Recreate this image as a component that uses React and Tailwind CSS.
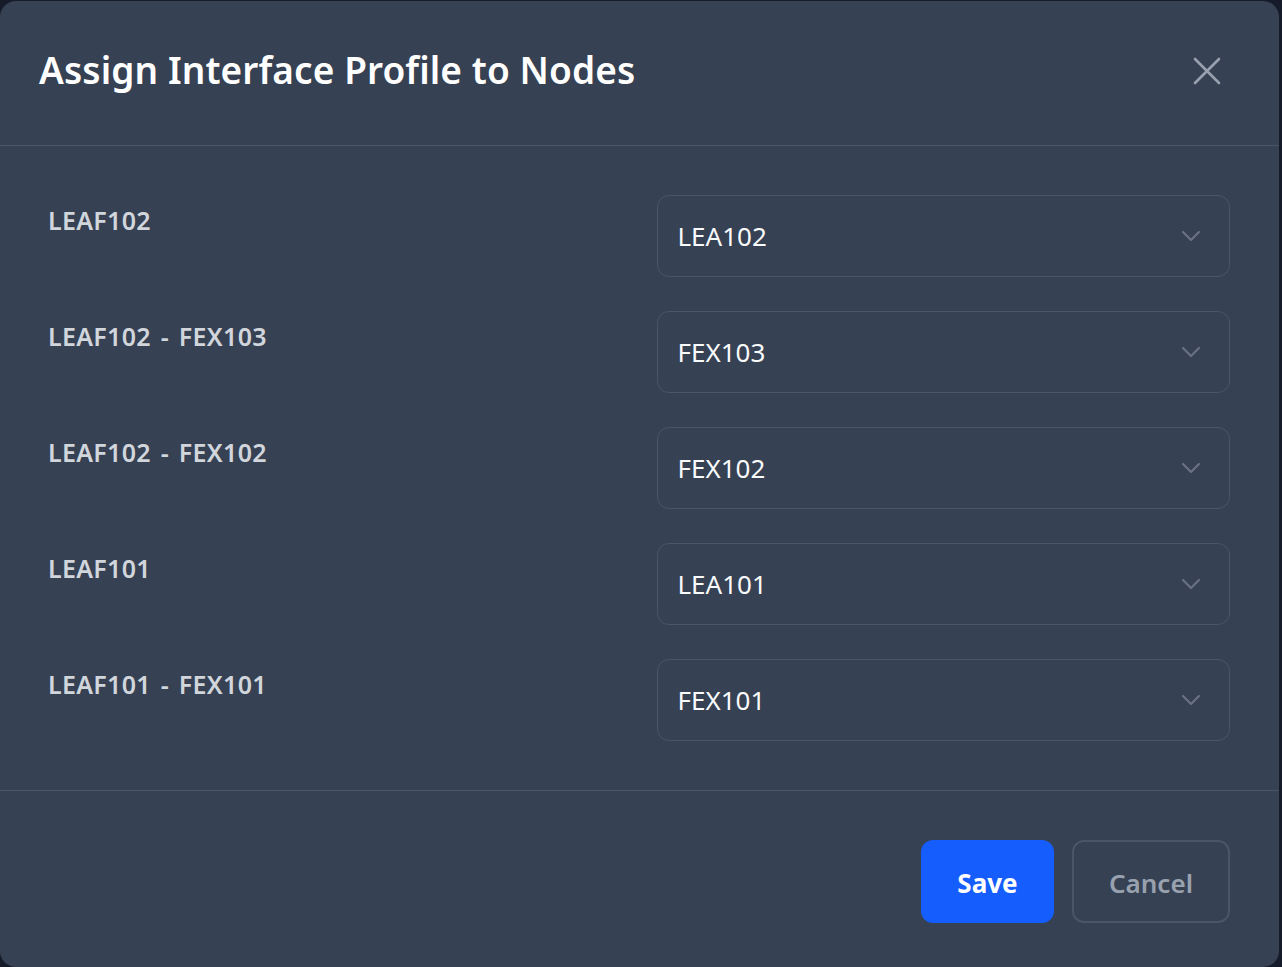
import React from 'react';

const rows = [
  { label: 'LEAF102', value: 'LEA102' },
  { label: 'LEAF102 - FEX103', value: 'FEX103' },
  { label: 'LEAF102 - FEX102', value: 'FEX102' },
  { label: 'LEAF101', value: 'LEA101' },
  { label: 'LEAF101 - FEX101', value: 'FEX101' },
];

const Chevron = () => (
  <svg width="20" height="12" viewBox="0 0 20 12" fill="none" className="text-gray-500">
    <path d="M2 2l8 8 8-8" stroke="currentColor" strokeWidth="2.2" strokeLinecap="round" strokeLinejoin="round" />
  </svg>
);

const NodeLabel = ({ text }) => {
  const parts = text.split(' - ');
  return (
    <label className="text-[25px] font-semibold text-gray-300 pt-[7px] leading-9 tracking-[0.3px]">
      {parts[0]}
      {parts[1] && (
        <>
          <span className="inline-block w-[28px] text-center">-</span>
          {parts[1]}
        </>
      )}
    </label>
  );
};

const App = () => {
  return (
    <div
      className="w-full h-[967px] bg-[#151b29] overflow-hidden"
      style={{ fontFamily: '"Noto Sans", "Open Sans", sans-serif' }}
    >
      <div className="w-[1279px] h-[966px] mt-px bg-gray-700 rounded-2xl flex flex-col">
        <div className="h-[145px] shrink-0 flex items-center justify-between pl-[39px] pr-[58px] border-b border-gray-600">
          <h2 className="text-[37px] font-semibold text-white leading-none tracking-[0.1px] -mt-2">
            Assign Interface Profile to Nodes
          </h2>
          <button className="text-gray-400 -mt-1">
            <svg width="28" height="28" viewBox="0 0 28 28" fill="none">
              <path d="M2 2l24 24M26 2L2 26" stroke="currentColor" strokeWidth="2.6" strokeLinecap="round" />
            </svg>
          </button>
        </div>

        <div className="flex flex-col gap-[34px] pt-[49px] pb-[49px] pl-[48px] pr-[49px] border-b border-gray-600">
          {rows.map((r) => (
            <div key={r.label} className="grid grid-cols-2 gap-x-[35px]">
              <NodeLabel text={r.label} />
              <div className="h-[82px] rounded-xl border border-gray-600 flex items-center justify-between pl-[20px] pr-[28px]">
                <span className="text-[26px] text-gray-50">{r.value}</span>
                <Chevron />
              </div>
            </div>
          ))}
        </div>

        <div className="flex justify-end gap-[18px] pt-[49px] pr-[49px]">
          <button className="w-[133px] h-[83px] rounded-xl bg-blue-600 text-white text-[26px] font-bold pt-[3px]">
            Save
          </button>
          <button className="w-[158px] h-[83px] rounded-xl border-2 border-gray-600 text-gray-400 text-[26px] font-semibold pt-[3px]">
            Cancel
          </button>
        </div>
      </div>
    </div>
  );
};

export default App;
